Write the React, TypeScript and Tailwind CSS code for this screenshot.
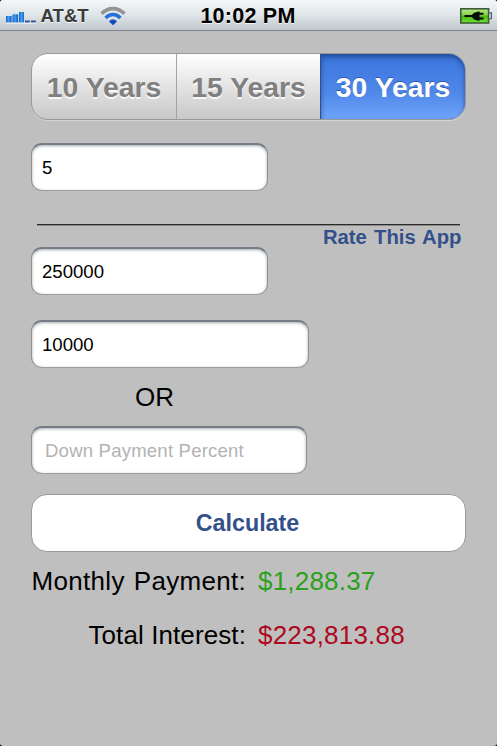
import { useState } from 'react';
import { clsx } from 'clsx';

const terms = [10, 15, 30];

function SignalIcon() {
  return (
    <svg width="31" height="14" viewBox="0 0 31 14" className="shrink-0">
      <defs>
        <linearGradient id="bar" gradientUnits="userSpaceOnUse" x1="0" y1="0" x2="6.5" y2="0" spreadMethod="repeat">
          <stop offset="0" stopColor="#1b62c8" />
          <stop offset="0.4" stopColor="#3aa3f6" />
          <stop offset="0.8" stopColor="#1b5cc0" />
        </linearGradient>
      </defs>
      <rect x="0" y="6" width="5.6" height="6.5" fill="url(#bar)" />
      <rect x="6.5" y="4.3" width="5.6" height="8.2" fill="url(#bar)" />
      <rect x="13" y="2" width="5" height="10.5" fill="url(#bar)" />
      <rect x="19" y="10.5" width="4.8" height="2" fill="#2c4f9e" />
      <rect x="25" y="10.5" width="4.8" height="2" fill="#2c4f9e" />
      <path d="M0 13.2H30" stroke="#fff" strokeOpacity="0.7" />
    </svg>
  );
}

function WifiIcon() {
  return (
    <svg width="26" height="20" viewBox="0 0 26 20" fill="none" className="shrink-0">
      <path d="M1.6 7.7C8 .9 18 .9 24.4 7.7" stroke="#949494" strokeWidth="3.6" />
      <path d="M5.6 12C9.8 7.4 16.2 7.4 20.4 12" stroke="#2372dc" strokeWidth="3.4" />
      <path d="M9 15.4C11 12.9 15 12.9 17 15.4L13 19.2Z" fill="#1549bd" />
    </svg>
  );
}

function BatteryIcon() {
  return (
    <svg width="33" height="16" viewBox="0 0 33 16" className="shrink-0">
      <defs>
        <linearGradient id="charge" x1="0" y1="0" x2="0" y2="1">
          <stop offset="0" stopColor="#b5e887" />
          <stop offset="0.45" stopColor="#86d04a" />
          <stop offset="0.5" stopColor="#48b512" />
          <stop offset="1" stopColor="#6fe236" />
        </linearGradient>
      </defs>
      <rect x="0.8" y="0.8" width="27.8" height="14.2" fill="url(#charge)" stroke="#3c5a37" strokeWidth="1.6" />
      <path d="M29.4 5h2v5.6h-2" fill="#d0d5d8" stroke="#59646d" strokeWidth="1.3" />
      <path
        d="M4.5 7H12C13.5 4.8 15 4 17.5 4V3.4h2V4.8h4v2h-4v2.6h4v2h-4v1.4h-2v-.6C15 12.2 13.5 11.4 12 9H4.5Z"
        fill="#050b03"
      />
    </svg>
  );
}

function StatusBar() {
  return (
    <header className="grid h-[31px] grid-cols-[1fr_auto_1fr] items-center border-b border-[#7d868e] bg-linear-to-b from-[#f4f7f9] via-[#dfe5e8] to-[#bfc8cd] [text-shadow:0_1px_0_rgba(255,255,255,0.8)]">
      <div className="flex items-center pl-[6px]">
        <span className="mt-[3px]">
          <SignalIcon />
        </span>
        <span className="mt-px ml-[3.5px] text-[18.6px] leading-[30px] font-bold text-[#3b3b3b]">AT&amp;T</span>
        <span className="ml-[11.5px]">
          <WifiIcon />
        </span>
      </div>
      <span className="mt-px mr-px text-[21.5px] leading-[30px] font-bold tracking-[0.25px] text-black">10:02 PM</span>
      <div className="flex justify-end pr-[4px]">
        <BatteryIcon />
      </div>
    </header>
  );
}

interface FieldProps {
  value: string;
  onChange: (value: string) => void;
  label: string;
  placeholder?: string;
  className?: string;
}

function Field({ value, onChange, label, placeholder, className }: FieldProps) {
  return (
    <input
      aria-label={label}
      value={value}
      placeholder={placeholder}
      onChange={(e) => onChange(e.target.value)}
      className={clsx(
        'block h-12 rounded-[11px] border border-t-2 border-[#8b909a] border-t-[#757c88] border-b-[#9b9ea4] bg-white text-[18.6px] text-black outline-none placeholder:tracking-[0.18px] placeholder:text-[#b3b3b3] shadow-[inset_0_1px_3px_rgba(80,86,98,0.5)]',
        className
      )}
    />
  );
}

export default function App() {
  const [years, setYears] = useState(30);
  const [rate, setRate] = useState('5');
  const [price, setPrice] = useState('250000');
  const [down, setDown] = useState('10000');
  const [percent, setPercent] = useState('');

  return (
    <div className="bg-black font-['Liberation_Sans',Arial,sans-serif]">
      <div className="h-[746px] w-[497px] overflow-hidden rounded-[3px] bg-[#bfbfbf]">
        <StatusBar />

        <main className="px-[31px] pt-[22px]">
          {/* Loan term */}
          <div className="grid h-[67px] w-[435px] grid-cols-[145px_144px_1fr] overflow-hidden rounded-[17px] border border-[#999] bg-linear-to-b from-white to-[#c8c8c8] shadow-[0_1px_0_#d5d5d5]">
            {terms.map((term) => (
              <button
                key={term}
                onClick={() => setYears(term)}
                className={clsx(
                  'pt-px text-[28.3px] font-bold whitespace-nowrap',
                  years === term
                    ? '-my-px -mr-px -ml-px rounded-r-[16px] border border-[#2b5192] bg-linear-to-b from-[#3a74dc] from-0% via-[#5088e9] via-60% to-[#6ea4fb] text-white shadow-[inset_0_3px_5px_rgba(16,45,105,0.6)] [text-shadow:0_-1px_0_rgba(25,60,130,0.6)]'
                    : 'border-r border-[#a3a3a3] text-[#808080] [text-shadow:0_2px_0_rgba(255,255,255,0.8)]'
                )}
              >
                {term} Years
              </button>
            ))}
          </div>

          <Field label="Interest rate" value={rate} onChange={setRate} className="mt-[23px] w-[237px] pl-[10px]" />

          <hr className="mt-[33px] ml-[6px] w-[423px] border-t border-[#292929] shadow-[0_1px_0_#8a8a8a]" />
          <a
            href="#rate"
            className="mr-[4.5px] block pt-[2px] text-right text-[20.3px] leading-[20px] font-bold text-[#34508a] [word-spacing:1.5px]"
          >
            Rate This App
          </a>

          {/* Loan amounts */}
          <Field label="Home price" value={price} onChange={setPrice} className="w-[237px] pl-[10px]" />
          <Field label="Down payment" value={down} onChange={setDown} className="mt-[25px] w-[278px] pl-[10px]" />
          <p className="mt-[14px] ml-[104px] text-[26px] leading-[30px] text-black">OR</p>
          <Field
            label="Down payment percent"
            value={percent}
            onChange={setPercent}
            placeholder="Down Payment Percent"
            className="mt-[14px] w-[276px] pl-[13px]"
          />

          <button className="mt-[20px] block h-[58px] w-[435px] rounded-[16px] border border-[#999] bg-white pt-px pr-[2px] text-[23.3px] font-bold text-[#34508a]">
            Calculate
          </button>

          {/* Results */}
          <dl className="mt-[14px] grid grid-cols-[215px_1fr] gap-x-[12px] gap-y-[24px] text-[26px] leading-[30px]">
            <dt className="text-right tracking-[0.3px] whitespace-nowrap text-black [word-spacing:1.5px]">Monthly Payment:</dt>
            <dd className="tracking-[0.2px] text-[#2ca01c]">$1,288.37</dd>
            <dt className="text-right tracking-[0.1px] whitespace-nowrap text-black">Total Interest:</dt>
            <dd className="tracking-[0.2px] text-[#ab0a20]">$223,813.88</dd>
          </dl>
        </main>
      </div>
    </div>
  );
}
